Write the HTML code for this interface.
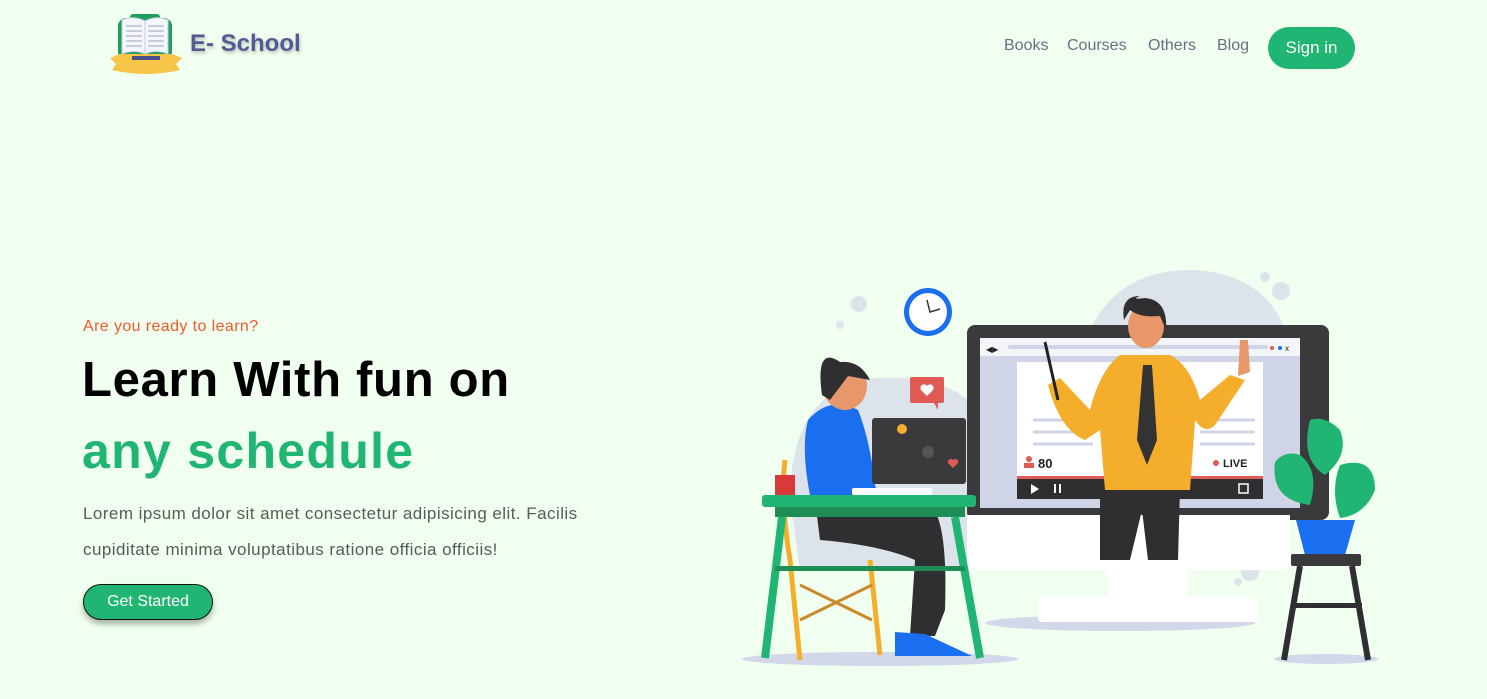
<!DOCTYPE html>
<html><head><meta charset="utf-8"><style>
*{margin:0;padding:0;box-sizing:border-box}
body{width:1487px;height:699px;background:#f0fff0;font-family:"Liberation Sans",sans-serif;position:relative;overflow:hidden}
.a{position:absolute;white-space:nowrap}
nav a{position:absolute;top:37px;font-size:16px;color:#6b6f80;text-decoration:none}
</style></head><body>
<svg class="a" style="left:108px;top:12px" width="76" height="66" viewBox="0 0 76 66">
<rect x="10" y="6" width="54" height="42" rx="8" fill="#1f9e5e"/>
<rect x="22" y="2" width="30" height="8" rx="3" fill="#1f9e5e"/>
<path d="M14 8 Q26 3 37 9 L37 42 Q26 37 14 42Z" fill="#f4f6fb" stroke="#c7cbe0"/>
<path d="M60 8 Q48 3 37 9 L37 42 Q48 37 60 42Z" fill="#f4f6fb" stroke="#c7cbe0"/>
<g stroke="#9aa0bd" stroke-width="1"><path d="M18 14h16M18 19h16M18 24h16M18 29h16M18 34h16M40 14h16M40 19h16M40 24h16M40 29h16M40 34h16"/></g>
<path d="M2 46 L12 42 L64 42 L74 46 L68 52 L72 58 Q38 66 4 58 L8 52Z" fill="#f7c54a"/>
<rect x="24" y="44" width="28" height="4" fill="#4a4f8a"/>
</svg>
<div class="a" style="left:190px;top:30px;font-size:24px;font-weight:bold;color:#555a96;text-shadow:1px 2px 3px rgba(0,0,0,.25)">E- School</div>
<nav>
<a style="left:1004px">Books</a><a style="left:1067px">Courses</a><a style="left:1148px">Others</a><a style="left:1217px">Blog</a>
</nav>
<div class="a" style="left:1268px;top:27px;width:87px;height:42px;border-radius:21px;background:#21b573;color:#fff;font-size:17px;line-height:42px;text-align:center">Sign in</div>

<div class="a" style="left:83px;top:318px;font-size:16px;letter-spacing:.4px;color:#f05a28">Are you ready to learn?</div>
<div class="a" style="left:82px;top:352px;font-size:49px;font-weight:bold;color:#000;letter-spacing:0.7px">Learn With fun on</div>
<div class="a" style="left:82px;top:422px;font-size:50px;font-weight:bold;color:#21b573;letter-spacing:1.3px">any schedule</div>
<div class="a" style="left:83px;top:496px;font-size:17px;letter-spacing:.45px;color:#5a5a5a;line-height:36px">Lorem ipsum dolor sit amet consectetur adipisicing elit. Facilis<br>cupiditate minima voluptatibus ratione officia officiis!</div>
<div class="a" style="left:83px;top:584px;width:130px;height:36px;border-radius:18px;background:#21b573;border:1.5px solid #111;color:#fff;font-size:16px;line-height:33px;text-align:center;box-shadow:0 4px 6px rgba(0,0,0,.3)">Get Started</div>

<svg class="a" style="left:0;top:0" width="1487" height="699" viewBox="0 0 1487 699">
<path d="M1090 330 Q1120 268 1195 270 Q1265 275 1285 330Z" fill="#dde3ea"/>
<path d="M790 500 Q790 400 860 380 Q930 370 968 400 L968 570 L800 570Z" fill="#dde3ea"/>
<circle cx="859" cy="304" r="8" fill="#dde3ea"/><circle cx="840" cy="325" r="4" fill="#dde3ea"/>
<circle cx="1281" cy="291" r="9" fill="#dde3ea"/><circle cx="1265" cy="277" r="5" fill="#dde3ea"/>
<circle cx="1250" cy="572" r="9" fill="#dde3ea"/><circle cx="1238" cy="582" r="4" fill="#dde3ea"/>
<ellipse cx="1120" cy="623" rx="135" ry="8" fill="#d2d7ea"/>
<ellipse cx="880" cy="659" rx="138" ry="7" fill="#d2d7ea"/>
<ellipse cx="1326" cy="659" rx="52" ry="5" fill="#d2d7ea"/>
<circle cx="928" cy="312" r="24" fill="#1a6ff0"/><circle cx="928" cy="312" r="19" fill="#fff"/>
<path d="M927 300 L930 312 L940 309" stroke="#333" stroke-width="1.5" fill="none"/>
<rect x="910" y="377" width="34" height="26" rx="2" fill="#e05a56"/><path d="M934 403 L938 410 L938 403Z" fill="#e05a56"/>
<path d="M927 396 l-6 -6 a3.5 3.5 0 0 1 6 -4 a3.5 3.5 0 0 1 6 4z" fill="#fff"/>
<rect x="967" y="325" width="362" height="195" rx="8" fill="#3a3a3c"/>
<path d="M967 515 H1290 V560 Q1290 570 1280 570 H977 Q967 570 967 560Z" fill="#fff"/>
<rect x="1108" y="560" width="80" height="42" fill="#fff"/>
<rect x="1038" y="597" width="220" height="25" rx="4" fill="#fff"/>
<rect x="980" y="338" width="320" height="170" fill="#cfd5e6"/>
<rect x="980" y="338" width="320" height="18" fill="#f4f5f9"/>
<rect x="1008" y="345" width="260" height="4" rx="2" fill="#cfd5e6"/>
<text x="986" y="352" font-size="8" fill="#222">◀▶</text>
<circle cx="1272" cy="348" r="2" fill="#e05a56"/><circle cx="1280" cy="348" r="2" fill="#1a6ff0"/>
<text x="1285" y="351" font-size="8" fill="#222">x</text>
<rect x="1017" y="362" width="246" height="116" fill="#fff"/>
<g stroke="#cfd5e6" stroke-width="3"><path d="M1033 420h60M1033 432h60M1033 444h60M1200 420h55M1200 432h55M1200 444h55"/></g>
<rect x="1017" y="476" width="246" height="3" fill="#e05a56"/>
<rect x="1017" y="479" width="246" height="20" fill="#2f2f31"/>
<path d="M1031 484 L1039 489 L1031 494Z" fill="#fff"/><rect x="1054" y="484" width="2" height="9" fill="#fff"/><rect x="1059" y="484" width="2" height="9" fill="#fff"/>
<rect x="1239" y="484" width="9" height="9" fill="none" stroke="#fff" stroke-width="1.5"/>
<text x="1038" y="468" font-size="13" font-weight="bold" fill="#222">80</text><circle cx="1029" cy="459" r="3" fill="#e05a56"/><rect x="1024" y="463" width="10" height="5" fill="#e05a56"/>
<circle cx="1216" cy="463" r="3" fill="#e05a56"/><text x="1223" y="467" font-size="11" font-weight="bold" fill="#222">LIVE</text>
<path d="M1100 488 L1180 488 L1178 560 L1148 560 L1142 510 L1130 560 L1100 560Z" fill="#2f2f31"/>
<path d="M1120 355 L1170 355 Q1190 365 1200 400 L1230 375 L1245 380 L1215 425 Q1205 435 1195 420 L1190 490 L1105 490 L1100 430 L1085 440 Q1060 430 1048 385 L1060 378 L1090 410 Q1100 370 1120 355Z" fill="#f5ad2c"/>
<path d="M1143 365 L1152 365 L1157 440 L1147 465 L1137 440Z" fill="#333"/>
<path d="M1045 342 L1058 400" stroke="#222" stroke-width="3"/>
<path d="M1240 340 L1248 340 L1250 372 L1238 376Z" fill="#e8976b"/>
<ellipse cx="1146" cy="326" rx="18" ry="22" fill="#e8976b"/>
<path d="M1124 320 Q1120 296 1140 296 Q1130 300 1145 298 Q1168 300 1166 330 L1160 316 Q1140 318 1130 310 Z" fill="#2f2f31"/>
<path d="M785 460 Q780 500 790 560 L800 660 M870 560 L880 655" stroke="#f5ad2c" stroke-width="5" fill="none"/>
<path d="M800 585 L872 620 M800 620 L872 585" stroke="#c98a2a" stroke-width="3"/>
<path d="M812 505 Q800 450 808 420 Q830 395 858 410 Q870 440 875 485 L880 500 L812 505Z" fill="#1a6ff0"/>
<ellipse cx="845" cy="386" rx="22" ry="24" fill="#e8976b"/>
<path d="M822 395 Q815 345 840 362 Q860 360 870 380 L848 376 L830 400Z" fill="#2f2f31"/>
<path d="M815 500 Q870 490 930 505 Q948 520 945 610 L935 636 L910 636 L915 560 Q880 545 820 540Z" fill="#2f2f31"/>
<path d="M895 632 L925 634 L972 656 L895 656Z" fill="#1a6ff0"/>
<rect x="872" y="418" width="94" height="66" rx="3" fill="#3a3a3c"/>
<circle cx="928" cy="452" r="6" fill="#555"/><circle cx="902" cy="429" r="5" fill="#f5ad2c"/>
<path d="M953 468 l-5 -5 a3 3 0 0 1 5 -3 a3 3 0 0 1 5 3z" fill="#e05a56"/>
<rect x="852" y="488" width="80" height="7" rx="2" fill="#fff"/>
<rect x="775" y="475" width="20" height="20" fill="#d9393a"/>
<rect x="762" y="495" width="214" height="12" rx="3" fill="#21b573"/>
<rect x="775" y="507" width="190" height="10" fill="#1f8e56"/>
<path d="M782 517 L765 658 M955 517 L980 658" stroke="#21b573" stroke-width="8"/>
<rect x="775" y="566" width="190" height="5" fill="#1f8e56"/>
<path d="M1310 420 Q1300 460 1325 475 Q1350 455 1340 430 Q1325 415 1310 420Z" fill="#21b573"/>
<path d="M1275 462 Q1270 500 1310 505 Q1320 470 1300 455 Q1285 450 1275 462Z" fill="#21b573"/>
<path d="M1340 465 Q1375 455 1375 490 Q1365 515 1340 518 Q1330 490 1340 465Z" fill="#21b573"/>
<path d="M1296 520 L1355 520 L1345 555 L1305 555Z" fill="#1a6ff0"/>
<rect x="1291" y="554" width="70" height="12" rx="2" fill="#3a3a3c"/>
<path d="M1300 566 L1284 660 M1352 566 L1368 660" stroke="#2f2f31" stroke-width="6"/>
<rect x="1292" y="603" width="70" height="5" fill="#2f2f31"/>
</svg>
</body></html>
